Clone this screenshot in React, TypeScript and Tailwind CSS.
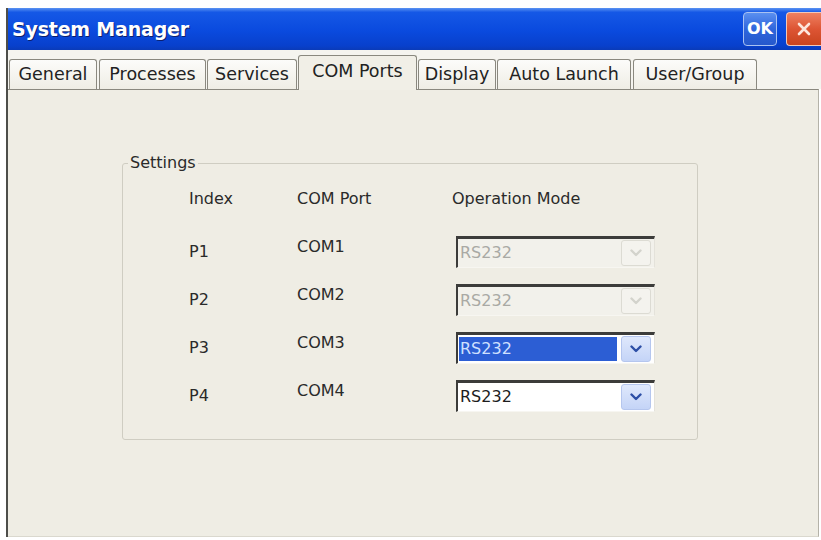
import React from "react";

const font = { fontFamily: '"DejaVu Sans", "Liberation Sans", sans-serif' };

function Chevron({ color }: { color: string }) {
  return (
    <svg width="12" height="8" viewBox="0 0 12 8">
      <path d="M1.5 1.5 L6 6 L10.5 1.5" fill="none" stroke={color} strokeWidth="2.4" strokeLinecap="round" strokeLinejoin="round" />
    </svg>
  );
}

function Combo({ mode }: { mode: "disabled" | "selected" | "normal" }) {
  const disabled = mode === "disabled";
  return (
    <div
      className={`ml-[4px] flex h-[32px] w-[199px] items-stretch border-t-[3px] border-l-[2px] border-t-[#3c3c3a] border-l-[#3c3c3a] border-r border-b border-r-[#e4e2da] border-b-[#f7f6f1] ${
        disabled ? "bg-[#f2f1eb]" : "bg-white"
      }`}
    >
      <div className="flex flex-1 items-center py-[2px] pl-[1px]">
        {mode === "selected" ? (
          <div className="flex h-full w-[158px] items-center bg-[#2c5ed4] pl-[1px] text-[16px] text-[#cfe0ff]">RS232</div>
        ) : (
          <div className={`pl-[1px] text-[16px] ${disabled ? "text-[#a9a9a4]" : "text-[#1d1d1d]"}`}>RS232</div>
        )}
      </div>
      <div
        className={`my-[1px] mr-[3px] flex w-[30px] items-center justify-center rounded-[3px] border ${
          disabled ? "border-[#dcdbd3] bg-[#f4f3ee]" : "border-[#b5c6ee] bg-[linear-gradient(180deg,#dfe8fc_0%,#c4d4f7_100%)]"
        }`}
      >
        <Chevron color={disabled ? "#d3d3cc" : "#2d4fa6"} />
      </div>
    </div>
  );
}

const tabs = [
  { label: "General", w: "w-[88px]", ml: "ml-[1px]" },
  { label: "Processes", w: "w-[107px]", ml: "ml-[2px]" },
  { label: "Services", w: "w-[90px]", ml: "ml-[1px]" },
  { label: "COM Ports", w: "w-[119px]", ml: "ml-[1px]", active: true },
  { label: "Display", w: "w-[78px]", ml: "ml-[1px]" },
  { label: "Auto Launch", w: "w-[134px]", ml: "ml-[1px]" },
  { label: "User/Group", w: "w-[124px]", ml: "ml-[2px]" },
];

const rows = [
  { p: "P1", c: "COM1", mode: "disabled" as const },
  { p: "P2", c: "COM2", mode: "disabled" as const },
  { p: "P3", c: "COM3", mode: "selected" as const },
  { p: "P4", c: "COM4", mode: "normal" as const },
];

export default function App() {
  return (
    <div className="h-[540px] w-[821px] overflow-hidden bg-white pl-[6px] pt-[8px]" style={font}>
      <div className="flex h-[529px] w-[815px] flex-col border-l-2 border-[#4e4e4a]">
        {/* Title bar */}
        <div className="flex h-[42px] items-center justify-between bg-[linear-gradient(180deg,#5b93f2_0%,#1558e6_10%,#0a4ade_55%,#0840cc_90%,#0a3bb8_100%)] pl-[4px]">
          <div className="text-[19px] font-bold tracking-[-0.2px] text-white [text-shadow:1px_1px_0_#0b1f6e]">System Manager</div>
          <div className="flex items-center gap-[9px]">
            <div className="flex h-[34px] w-[34px] items-center justify-center rounded-[4px] border border-[#a9c2f2] bg-[linear-gradient(180deg,#5a8ff0_0%,#2f66dc_50%,#2558cc_100%)] text-[16px] font-bold text-white">
              OK
            </div>
            <div className="flex h-[34px] w-[35px] items-center justify-center rounded-l-[4px] border border-r-0 border-[#f2c8b8] bg-[linear-gradient(180deg,#ee8060_0%,#dd5534_50%,#c9441f_100%)]">
              <svg width="16" height="16" viewBox="0 0 16 16">
                <path d="M3 3 L13 13 M13 3 L3 13" stroke="#fde6dc" strokeWidth="2.6" strokeLinecap="round" />
              </svg>
            </div>
          </div>
        </div>

        {/* Tab strip */}
        <div className="flex h-[39px] items-end bg-[#f5f4ef]">
          {tabs.map((t) => (
            <div
              key={t.label}
              className={`${t.w} ${t.ml} flex items-center justify-center rounded-t-[3px] border border-b-0 border-[#8a887f] text-[17.5px] text-[#222] ${
                t.active
                  ? "relative z-10 -mb-[1px] h-[35px] bg-[#f1efe7] pb-[3px]"
                  : "h-[30px] bg-[linear-gradient(180deg,#fcfcfa_0%,#efede5_100%)]"
              }`}
            >
              {t.label}
            </div>
          ))}
        </div>

        {/* Panel */}
        <div className="mr-[2px] flex-1 border-t border-r border-b border-t-[#8a887f] border-r-[#b4b2a8] border-b-[#dad8ce] bg-[#efede4]">
          <fieldset className="ml-[114px] mt-[64px] w-[576px] rounded-[3px] border border-[#cfcdc2] pb-[27px]">
            <legend className="ml-[5px] px-[2px] text-[16px] leading-[18px] text-[#2a2a2a]">Settings</legend>
            <div className="mt-[12px] flex h-[30px] items-center pl-[66px] text-[16px] text-[#2a2a2a]">
              <div className="w-[108px]">Index</div>
              <div className="w-[155px]">COM Port</div>
              <div>Operation Mode</div>
            </div>
            <div className="mt-[22px] flex flex-col gap-[16px]">
              {rows.map((r) => (
                <div key={r.p} className="flex h-[32px] items-stretch pl-[66px] text-[16px] text-[#2a2a2a]">
                  <div className="flex w-[108px] items-center">{r.p}</div>
                  <div className="flex w-[155px] items-center pb-[10px]">{r.c}</div>
                  <Combo mode={r.mode} />
                </div>
              ))}
            </div>
          </fieldset>
        </div>
      </div>
    </div>
  );
}
